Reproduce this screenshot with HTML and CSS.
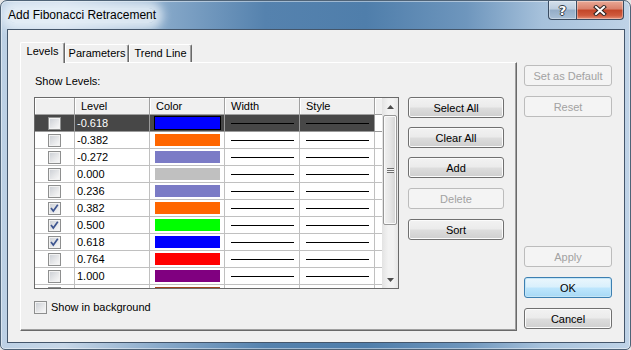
FILE: index.html
```html
<!DOCTYPE html>
<html lang="en">
  <head>
    <meta charset="UTF-8" />
    <title>Add Fibonacci Retracement</title>
    <link rel="stylesheet" href="styles.css">
  </head>
  <body>
    <div class="window">
      <div class="titlebar">
        <span class="title">Add Fibonacci Retracement</span>
        <div class="caption-btns">
          <div class="cap help">?</div>
          <div class="cap close">
            <svg width="14" height="11" viewBox="0 0 14 11">
              <path d="M3 2 L11 9 M11 2 L3 9" stroke="#2e2422" stroke-width="4" stroke-linecap="square" fill="none" />
              <path d="M3 2 L11 9 M11 2 L3 9" stroke="#fff" stroke-width="2" stroke-linecap="square" fill="none" />
            </svg>
          </div>
        </div>
      </div>

      <div class="client">
        <div class="tabs-wrap">
          <div class="tab-strip">
            <div class="tab active" style="width: 45px">Levels</div>
            <div class="tab" style="width: 64px">Parameters</div>
            <div class="tab" style="width: 63px">Trend Line</div>
          </div>
          <div class="panel">
            <div class="label">Show Levels:</div>
            <div class="levels-row">
              <div class="grid">
                <div class="grid-body">
                  <div class="row head">
                    <div class="c"></div>
                    <div class="c">Level</div>
                    <div class="c">Color</div>
                    <div class="c">Width</div>
                    <div class="c">Style</div>
                    <div class="c"></div>
                  </div>
                  <div class="row sel">
                    <div class="c"><span class="cb"></span></div>
                    <div class="c val">-0.618</div>
                    <div class="c"><span class="swatch" style="background:#0000ff"></span></div>
                    <div class="c"><span class="ln"></span></div>
                    <div class="c"><span class="ln"></span></div>
                    <div class="c"></div>
                  </div>
                  <div class="row">
                    <div class="c"><span class="cb"></span></div>
                    <div class="c val">-0.382</div>
                    <div class="c"><span class="swatch" style="background:#ff6600"></span></div>
                    <div class="c"><span class="ln"></span></div>
                    <div class="c"><span class="ln"></span></div>
                    <div class="c"></div>
                  </div>
                  <div class="row">
                    <div class="c"><span class="cb"></span></div>
                    <div class="c val">-0.272</div>
                    <div class="c"><span class="swatch" style="background:#7b7bc6"></span></div>
                    <div class="c"><span class="ln"></span></div>
                    <div class="c"><span class="ln"></span></div>
                    <div class="c"></div>
                  </div>
                  <div class="row">
                    <div class="c"><span class="cb"></span></div>
                    <div class="c val">0.000</div>
                    <div class="c"><span class="swatch" style="background:#c0c0c0"></span></div>
                    <div class="c"><span class="ln"></span></div>
                    <div class="c"><span class="ln"></span></div>
                    <div class="c"></div>
                  </div>
                  <div class="row">
                    <div class="c"><span class="cb"></span></div>
                    <div class="c val">0.236</div>
                    <div class="c"><span class="swatch" style="background:#7b7bc6"></span></div>
                    <div class="c"><span class="ln"></span></div>
                    <div class="c"><span class="ln"></span></div>
                    <div class="c"></div>
                  </div>
                  <div class="row">
                    <div class="c"><span class="cb"><svg width="11" height="11" viewBox="0 0 11 11"><polyline points="2,5 4.3,8 8.8,1.8" fill="none" stroke="#3f5690" stroke-width="1.7" /></svg></span></div>
                    <div class="c val">0.382</div>
                    <div class="c"><span class="swatch" style="background:#ff6600"></span></div>
                    <div class="c"><span class="ln"></span></div>
                    <div class="c"><span class="ln"></span></div>
                    <div class="c"></div>
                  </div>
                  <div class="row">
                    <div class="c"><span class="cb"><svg width="11" height="11" viewBox="0 0 11 11"><polyline points="2,5 4.3,8 8.8,1.8" fill="none" stroke="#3f5690" stroke-width="1.7" /></svg></span></div>
                    <div class="c val">0.500</div>
                    <div class="c"><span class="swatch" style="background:#00ff00"></span></div>
                    <div class="c"><span class="ln"></span></div>
                    <div class="c"><span class="ln"></span></div>
                    <div class="c"></div>
                  </div>
                  <div class="row">
                    <div class="c"><span class="cb"><svg width="11" height="11" viewBox="0 0 11 11"><polyline points="2,5 4.3,8 8.8,1.8" fill="none" stroke="#3f5690" stroke-width="1.7" /></svg></span></div>
                    <div class="c val">0.618</div>
                    <div class="c"><span class="swatch" style="background:#0000ff"></span></div>
                    <div class="c"><span class="ln"></span></div>
                    <div class="c"><span class="ln"></span></div>
                    <div class="c"></div>
                  </div>
                  <div class="row">
                    <div class="c"><span class="cb"></span></div>
                    <div class="c val">0.764</div>
                    <div class="c"><span class="swatch" style="background:#ff0000"></span></div>
                    <div class="c"><span class="ln"></span></div>
                    <div class="c"><span class="ln"></span></div>
                    <div class="c"></div>
                  </div>
                  <div class="row">
                    <div class="c"><span class="cb"></span></div>
                    <div class="c val">1.000</div>
                    <div class="c"><span class="swatch" style="background:#800080"></span></div>
                    <div class="c"><span class="ln"></span></div>
                    <div class="c"><span class="ln"></span></div>
                    <div class="c"></div>
                  </div>
                  <div class="row">
                    <div class="c"><span class="cb"></span></div>
                    <div class="c val">1.272</div>
                    <div class="c"><span class="swatch" style="background:#a0441c"></span></div>
                    <div class="c"><span class="ln"></span></div>
                    <div class="c"><span class="ln"></span></div>
                    <div class="c"></div>
                  </div>
                </div>
                <div class="scrollbar">
                  <div class="sb-arrow">
                    <svg width="7" height="4" viewBox="0 0 7 4"><polygon points="0,4 3.5,0 7,4" fill="#4d4d4d" /></svg>
                  </div>
                  <div class="sb-thumb">
                    <span class="grip"></span>
                  </div>
                  <div class="sb-track"></div>
                  <div class="sb-arrow">
                    <svg width="7" height="4" viewBox="0 0 7 4"><polygon points="0,0 7,0 3.5,4" fill="#4d4d4d" /></svg>
                  </div>
                </div>
              </div>

              <div class="grid-btns">
                <button class="btn">Select All</button>
                <button class="btn">Clear All</button>
                <button class="btn">Add</button>
                <button class="btn off nudge" disabled>Delete</button>
                <button class="btn nudge">Sort</button>
              </div>
            </div>

            <label class="check-row">
              <span class="cb"></span>
              <span>Show in background</span>
            </label>
          </div>
        </div>

        <div class="side">
          <button class="btn off" disabled>Set as Default</button>
          <button class="btn off" disabled>Reset</button>
          <button class="btn off push" disabled>Apply</button>
          <button class="btn default">OK</button>
          <button class="btn">Cancel</button>
        </div>
      </div>
    </div>
  </body>
</html>
```

FILE: styles.css
```css
body {
  margin: 0;
  padding: 0;
  background-color: #e6e6e6;
  font-family: "Liberation Sans", Arial, sans-serif;
  font-size: 11px;
  color: #000;
}

.window {
  width: 631px;
  height: 350px;
  box-sizing: border-box;
  display: flex;
  flex-direction: column;
  border: 1px solid #4f6377;
  border-radius: 7px 7px 5px 5px;
  overflow: hidden;
  background: linear-gradient(to right, #bcd0e4 0%, #c6d6e7 10%, #86a8c9 26%, #5582ae 42%, #4f7eab 58%, #6e96bd 74%, #a6c1db 86%, #bfd3e7 100%);
  box-shadow: inset 0 0 0 1px rgba(255, 255, 255, 0.45);
}

/* title bar */
.titlebar {
  height: 28px;
  flex-shrink: 0;
  display: flex;
  justify-content: space-between;
  align-items: flex-start;
  padding: 0 6px 0 7px;
}

.title {
  margin-top: 7px;
  font-size: 12px;
  line-height: 15px;
  color: #000;
  background-color: rgba(236, 243, 250, 0.78);
  border-radius: 8px;
  box-shadow: 0 0 10px 7px rgba(236, 243, 250, 0.78);
}

.caption-btns {
  display: flex;
}

.cap {
  height: 19px;
  box-sizing: border-box;
  border: 1px solid #3a4c61;
  border-top: none;
  display: flex;
  align-items: center;
  justify-content: center;
  box-shadow: inset 0 0 0 1px rgba(255, 255, 255, 0.35);
}

.help {
  width: 28px;
  border-right: none;
  border-radius: 0 0 0 4px;
  background: linear-gradient(#d3dfeb 0%, #bccddf 45%, #94adc7 50%, #a9c0d6 100%);
  color: #fff;
  font-family: "DejaVu Sans", sans-serif;
  font-weight: bold;
  font-size: 13px;
  text-shadow: -1px 0 #333b44, 1px 0 #333b44, 0 -1px #333b44, 0 1px #333b44;
}

.close {
  width: 48px;
  border-radius: 0 0 4px 0;
  background: linear-gradient(#e9a996 0%, #d9806b 45%, #c24528 50%, #cf5a3d 80%, #e59077 100%);
}

/* client area */
.client {
  flex: 1;
  display: flex;
  margin: 0 5px 6px 6px;
  padding: 12px 11px 11px 12px;
  border: 1px solid #44566b;
  background-color: #f0f0f0;
}

.tabs-wrap {
  width: 497px;
  display: flex;
  flex-direction: column;
}

.tab-strip {
  height: 20px;
  display: flex;
  align-items: flex-end;
}

.tab {
  height: 18px;
  box-sizing: border-box;
  border-top: 1px solid #fff;
  border-left: 1px solid #fff;
  border-right: 1px solid #696969;
  border-radius: 2px 2px 0 0;
  box-shadow: inset -1px 0 #a0a0a0;
  text-align: center;
  line-height: 16px;
  background-color: #f0f0f0;
}

.tab.active {
  height: 21px;
  margin-bottom: -1px;
  line-height: 17px;
  position: relative;
  z-index: 1;
}

.panel {
  flex: 1;
  box-sizing: border-box;
  border-top: 1px solid #fff;
  border-left: 1px solid #fff;
  border-right: 1px solid #696969;
  border-bottom: 1px solid #696969;
  box-shadow: inset -1px -1px #a0a0a0;
  padding: 11px 13px 0 13px;
}

.label {
  line-height: 14px;
  margin: 0 0 9px 1px;
}

.levels-row {
  display: flex;
  gap: 9px;
}

/* levels grid */
.grid {
  width: 365px;
  height: 192px;
  box-sizing: border-box;
  border: 1px solid #6a6a6a;
  display: flex;
  background-color: #fff;
}

.grid-body {
  width: 347px;
  overflow: hidden;
}

.row {
  display: grid;
  grid-template-columns: 40px 75px 75px 75px 75px 7px;
  height: 17px;
}

.c {
  box-sizing: border-box;
  border-right: 1px solid #c0c0c0;
  border-bottom: 1px solid #c0c0c0;
  display: flex;
  align-items: center;
  line-height: 16px;
  white-space: nowrap;
}

.c:last-child {
  border-right: none;
}

.head .c {
  background-color: #f0f0f0;
  border-right-color: #a0a0a0;
  border-bottom-color: #a0a0a0;
  box-shadow: inset 1px 1px #fff;
  padding-left: 6px;
}

.val {
  padding-left: 2px;
}

.row.sel .c {
  background-color: #474747;
  color: #fff;
  border-right-color: #9a9a9a;
  border-bottom-color: #9a9a9a;
}

.row.sel .c:last-child {
  background-color: #fff;
}

.row.sel .swatch {
  outline: 1px solid #000;
}

.swatch {
  width: 65px;
  height: 12px;
  margin-left: 5px;
}

.ln {
  width: 63px;
  height: 1px;
  margin-left: 6px;
  background-color: #000;
}

.cb {
  width: 13px;
  height: 13px;
  box-sizing: border-box;
  border: 1px solid #8e8f8f;
  background: linear-gradient(135deg, #c9cdd3 0%, #e6e7e9 55%, #fbfbfb 100%);
  box-shadow: inset 0 0 0 1px #f2f2f2;
  display: flex;
  align-items: center;
  justify-content: center;
}

.row .cb {
  margin-left: 13px;
}

.scrollbar {
  width: 16px;
  display: flex;
  flex-direction: column;
  background: linear-gradient(to right, #e3e3e3, #f2f2f2 40%, #f2f2f2 70%, #e6e6e6);
}

.sb-arrow {
  height: 17px;
  display: flex;
  align-items: center;
  justify-content: center;
}

.sb-thumb {
  height: 110px;
  margin: 0 1px;
  box-sizing: border-box;
  border: 1px solid #979797;
  border-radius: 2px;
  background: linear-gradient(to right, #f1f1f1, #e6e6e6 50%, #d5d5d5);
  box-shadow: inset 0 0 0 1px #fafafa;
  display: flex;
  align-items: center;
  justify-content: center;
}

.grip {
  width: 7px;
  height: 5px;
  background: repeating-linear-gradient(#6f6f6f 0, #6f6f6f 1px, #f4f4f4 1px, #f4f4f4 2px);
}

.sb-track {
  flex: 1;
}

/* buttons */
.grid-btns {
  display: flex;
  flex-direction: column;
  gap: 9px;
}

.btn {
  width: 96px;
  height: 21px;
  padding: 0;
  box-sizing: border-box;
  border: 1px solid #707070;
  border-radius: 3px;
  background: linear-gradient(#f2f2f2 0%, #ebebeb 48%, #dddddd 52%, #cfcfcf 100%);
  box-shadow: inset 0 0 0 1px #fbfbfb;
  font-family: "Liberation Sans", Arial, sans-serif;
  font-size: 11px;
  color: #000;
}

.btn.off {
  border-color: #bcbcbc;
  background: #f4f4f4;
  box-shadow: none;
  color: #a2a2a2;
}

.btn.default {
  border-color: #3c7fb1;
  background: linear-gradient(#eaf6fd 0%, #d9f0fc 48%, #bee6fd 52%, #a7d9f5 100%);
  box-shadow: inset 0 0 0 1px #c4e5f6;
}

.nudge {
  margin-top: 1px;
}

.check-row {
  display: flex;
  align-items: center;
  gap: 4px;
  margin-top: 12px;
  line-height: 13px;
}

/* right column */
.side {
  width: 88px;
  margin-left: 7px;
  padding: 23px 0 2px 0;
  display: flex;
  flex-direction: column;
  gap: 10px;
}

.side .btn {
  width: 88px;
}

.side .push {
  margin-top: auto;
}
```
